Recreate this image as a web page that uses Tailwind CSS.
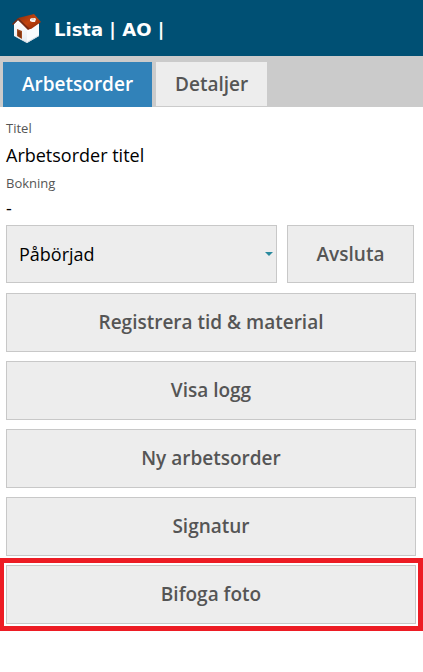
<!DOCTYPE html>
<html lang="sv">
<head>
    <meta charset="UTF-8">
    <meta name="viewport" content="width=device-width, initial-scale=1.0">
    <title>Arbetsorder</title>
    <script src="https://cdn.jsdelivr.net/npm/@tailwindcss/browser@4"></script>
</head>
<body class="bg-white text-black font-['Trebuchet_MS','Open_Sans',sans-serif]">

<!-- Top bar -->
<header class="flex items-center gap-3 h-14 px-3 pt-0.5 bg-[#005074] text-white">
    <a href="#" aria-label="Hem">
        <svg class="w-[30px] h-[30px]" viewBox="0 0 30 30">
            <defs>
                <linearGradient id="roof" x1="0" y1="0" x2="1" y2="1">
                    <stop offset="0" stop-color="#8a2c0a"/>
                    <stop offset="0.5" stop-color="#c2440f"/>
                    <stop offset="1" stop-color="#8a2606"/>
                </linearGradient>
                <linearGradient id="wall" x1="0" y1="0" x2="0" y2="1">
                    <stop offset="0" stop-color="#ffffff"/>
                    <stop offset="1" stop-color="#e8ecf0"/>
                </linearGradient>
            </defs>
            <path d="M2 10 L6 6 L17 15 L15 29 L2 22 Z" fill="url(#wall)"/>
            <path d="M15 15 L18 14 L27 9 L27 22 L15 29 Z" fill="#fafbfc"/>
            <path d="M2 22 L15 28 L27 21 L27 22 L15 29 Z" fill="#cfd8e0"/>
            <path d="M5 15 L10 17 L10 25 L5 22 Z" fill="#a04a20"/>
            <path d="M6 17 L9 18 L9 24 L6 22 Z" fill="#83360f"/>
            <path d="M6 4 L22 0 L29 8 L19 15 L17 15 Z" fill="url(#roof)"/>
            <path d="M6 4 L0 10 L1 11 L6 6 L16 16 L18 15 Z" fill="#7a2a12"/>
            <path d="M18 5 L20 4 L23 4 L24 5 L23 8 L20 8 L18 7 Z" fill="#f8f4f2"/>
            <path d="M19 5 L21 4 L23 5 L21 6 Z" fill="#d3c5be"/>
        </svg>
    </a>
    <span class="text-[18px] font-bold font-[Verdana,'DejaVu_Sans',sans-serif]">Lista | AO |</span>
</header>

<!-- Tabs -->
<nav class="flex items-end gap-1 pt-1.5 pl-[3px] bg-[#cbcbcb]">
    <button type="button" class="h-[45px] px-[19px] bg-[#3182b9] text-white text-[19px] font-semibold">Arbetsorder</button>
    <button type="button" class="h-11 mb-px px-[19px] bg-[#ededed] text-[#555] text-[19px] font-semibold">Detaljer</button>
</nav>

<!-- Work order -->
<main class="px-1.5 pt-3 pb-12">
    <dl>
        <dt class="text-[13px] leading-[18px] text-[#555]">Titel</dt>
        <dd class="text-[18px] leading-[37px]">Arbetsorder titel</dd>
        <dt class="text-[13px] leading-[18px] text-[#555]">Bokning</dt>
        <dd class="text-[18px] leading-[33px]">-</dd>
    </dl>

    <div class="flex gap-2.5 pr-[3px]">
        <div class="relative flex-1">
            <select aria-label="Status" class="appearance-none w-full h-[58px] px-3 bg-[#ededed] border border-[#c8c8c8] text-[18px]">
                <option>Påbörjad</option>
            </select>
            <svg class="absolute right-1 top-[27px] w-2 h-1 pointer-events-none" viewBox="0 0 8 4"><path d="M0 0H8L4 4Z" fill="#2a8a9e"/></svg>
        </div>
        <button type="button" class="w-[127px] h-[58px] bg-[#ededed] border border-[#c8c8c8] text-[#555] text-[19px] font-semibold">Avsluta</button>
    </div>

    <div class="flex flex-col gap-[9px] mt-2.5 pr-px">
        <button type="button" class="h-[59px] bg-[#ededed] border border-[#c8c8c8] text-[#555] text-[19px] font-semibold">Registrera tid &amp; material</button>
        <button type="button" class="h-[59px] bg-[#ededed] border border-[#c8c8c8] text-[#555] text-[19px] font-semibold">Visa logg</button>
        <button type="button" class="h-[59px] bg-[#ededed] border border-[#c8c8c8] text-[#555] text-[19px] font-semibold">Ny arbetsorder</button>
        <button type="button" class="h-[59px] bg-[#ededed] border border-[#c8c8c8] text-[#555] text-[19px] font-semibold">Signatur</button>
        <button type="button" class="h-[59px] bg-[#ededed] border border-[#c8c8c8] text-[#555] text-[19px] font-semibold outline-5 outline-offset-2 outline-[#ed1c24]">Bifoga foto</button>
    </div>
</main>

</body>
</html>
